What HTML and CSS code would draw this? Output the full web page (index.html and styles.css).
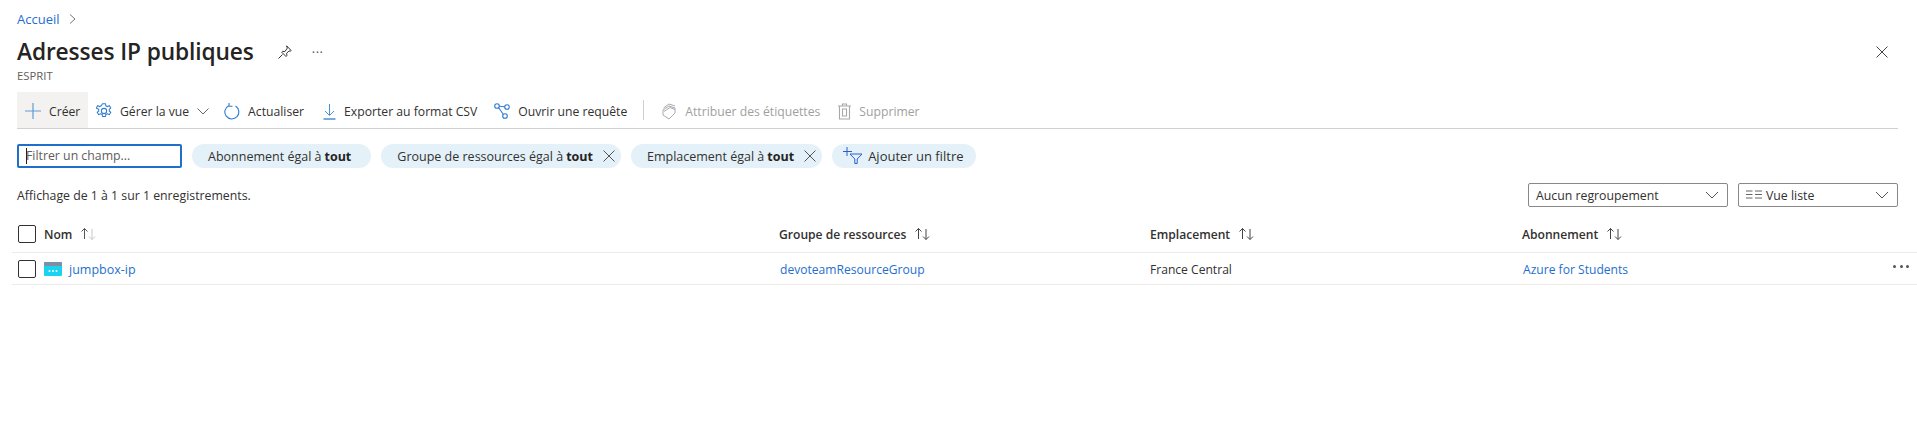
FILE: index.html
```html
<!DOCTYPE html>
<html lang="fr">
<head>
<meta charset="utf-8">
<title>Adresses IP publiques</title>
<link rel="stylesheet" href="styles.css">
</head>
<body>
<div class="page">
  <nav class="crumb"><a href="#">Accueil</a>
    <svg class="chev" width="7" height="10" viewBox="0 0 7 10"><path d="M1 .5l5 4.500-5 4.500" fill="none" stroke="#777" stroke-width="1"/></svg>
  </nav>
  <header class="head">
    <div class="title-row">
      <h1>Adresses IP publiques</h1>
      <svg class="pin" width="14" height="14" viewBox="0 0 14 14"><path d="M8.500.8l4.700 4.700-1 .7-1.200-.3-2.400 2.400.3 2.300-.9.9-4.300-4.300.9-.9 2.300.3L9.300 3.200 9 2z" fill="none" stroke="#333" stroke-width="1"/><path d="M.5 13.500l4-4" stroke="#333" stroke-width="1"/></svg>
      <span class="more-t">···</span>
      <svg class="close" width="12" height="12" viewBox="0 0 12 12"><path d="M.5.500l11 11M11.500.500l-11 11" stroke="#444" stroke-width="1"/></svg>
    </div>
    <div class="sub">ESPRIT</div>
  </header>
  <div class="toolbar">
    <button class="tb tb-on"><svg width="16" height="16" viewBox="0 0 16 16"><path d="M8 0v16M0 8h16" stroke="#5e9bd6" stroke-width="1.200"/></svg>Créer</button>
    <button class="tb tb-gear"><svg width="16" height="16" viewBox="0 0 17 17"><g fill="none" stroke="#2f7cd0" stroke-width="1.100"><circle cx="8.500" cy="8.500" r="2.800"/><path d="M7 .8h3l.5 2.200 1.700.8 2-1 1.500 2.500-1.600 1.500v1.600l1.600 1.500-1.500 2.500-2-1-1.700.8-.5 2.200H7l-.5-2.200-1.700-.8-2 1-1.500-2.500 1.600-1.500V6.800L.3 5.300l1.500-2.500 2 1 1.700-.8z"/></g></svg>Gérer la vue<svg class="caret" width="12" height="7" viewBox="0 0 12 7"><path d="M.5.500L6 6l5.500-5.500" fill="none" stroke="#666"/></svg></button>
    <button class="tb tb-ref"><svg width="16" height="17" viewBox="0 0 16 17"><path d="M11.500 3a7 7 0 1 1-6.800-.3" fill="none" stroke="#2f7cd0" stroke-width="1.100"/><path d="M5 0v3.200H8.500" fill="none" stroke="#2f7cd0" stroke-width="1.100"/></svg>Actualiser</button>
    <button class="tb tb-ex"><svg width="15" height="17" viewBox="0 0 15 17"><path d="M7.500 1v11M3 8l4.500 4.500L12 8" fill="none" stroke="#4a90d9" stroke-width="1"/><path d="M1.500 16h12" stroke="#2f7cd0" stroke-width="1.300"/></svg>Exporter au format CSV</button>
    <button class="tb tb-q"><svg width="16" height="16" viewBox="0 0 16 16"><g fill="none" stroke="#2f7cd0" stroke-width="1.100"><circle cx="3" cy="3" r="2.300"/><circle cx="13" cy="4" r="2.300"/><circle cx="11" cy="13" r="2.300"/><path d="M5.300 3.300l5.400.5M4.700 4.700l4.700 6.800"/></g></svg>Ouvrir une requête</button>
    <span class="sep"></span>
    <button class="tb dis tb-tag"><svg width="14" height="17" viewBox="0 0 14 17"><path d="M1 7l6-4 6 2v5l-6 6-6-4z M1.500 5L7 1l6 2M2 8.500L8 4.500l5 2" fill="none" stroke="#aaa" stroke-width="1"/></svg>Attribuer des étiquettes</button>
    <button class="tb dis tb-del"><svg width="15" height="17" viewBox="0 0 15 17"><path d="M1 3h13M5.500 3V1h4v2M2.500 3v13h10V3M5.500 6v7h4V6z" fill="none" stroke="#a8a8a8" stroke-width="1.100"/></svg>Supprimer</button>
  </div>
  <div class="filters">
    <div class="field"><span class="cursor"></span>Filtrer un champ...</div>
    <span class="pill">Abonnement égal à <b>tout</b></span>
    <span class="pill pill-x">Groupe de ressources égal à <b>tout</b><svg width="12" height="12" viewBox="0 0 12 12"><path d="M.5.500l11 11M11.500.500l-11 11" stroke="#555" stroke-width="1"/></svg></span>
    <span class="pill pill-x">Emplacement égal à <b>tout</b><svg width="12" height="12" viewBox="0 0 12 12"><path d="M.5.500l11 11M11.500.500l-11 11" stroke="#555" stroke-width="1"/></svg></span>
    <span class="pill pill-add"><svg width="20" height="18" viewBox="0 0 20 18"><path d="M4 0v9M0 4.500h9" stroke="#2b5fd0" stroke-width="1"/><path d="M7 7h12l-4.800 5v4.500h-2.400V12z" fill="none" stroke="#2b5fd0" stroke-width="1"/></svg>Ajouter un filtre</span>
  </div>
  <div class="status">
    <span>Affichage de 1 à 1 sur 1 enregistrements.</span>
    <div class="drops">
      <div class="drop d1"><span>Aucun regroupement</span><svg width="14" height="8" viewBox="0 0 14 8"><path d="M1 1l6 6 6-6" fill="none" stroke="#555"/></svg></div>
      <div class="drop d2"><span class="vl"><svg width="16" height="10" viewBox="0 0 16 10"><path d="M0 1h6.500M0 4.500h6.500M0 8h6.500M9 1h7M9 4.500h7M9 8h7" stroke="#666"/></svg>Vue liste</span><svg width="14" height="8" viewBox="0 0 14 8"><path d="M1 1l6 6 6-6" fill="none" stroke="#555"/></svg></div>
    </div>
  </div>
  <div class="table">
    <div class="row hdr">
      <div class="c"><span class="box"></span><b>Nom</b><svg class="sort" width="17" height="14" viewBox="0 0 17 14"><path d="M4.500 12V1.500M1.500 4.500l3-3 3 3" fill="none" stroke="#555"/><path d="M12 2v10.500M9 9.500l3 3 3-3" fill="none" stroke="#c8c8c8"/></svg></div>
      <div class="c"><b>Groupe de ressources</b><svg class="sort" width="17" height="14" viewBox="0 0 17 14"><path d="M4.500 12V1.500M1.500 4.500l3-3 3 3M12 2v10.500M9 9.500l3 3 3-3" fill="none" stroke="#444"/></svg></div>
      <div class="c"><b>Emplacement</b><svg class="sort" width="17" height="14" viewBox="0 0 17 14"><path d="M4.500 12V1.500M1.500 4.500l3-3 3 3M12 2v10.500M9 9.500l3 3 3-3" fill="none" stroke="#444"/></svg></div>
      <div class="c"><b>Abonnement</b><svg class="sort" width="17" height="14" viewBox="0 0 17 14"><path d="M4.500 12V1.500M1.500 4.500l3-3 3 3M12 2v10.500M9 9.500l3 3 3-3" fill="none" stroke="#444"/></svg></div>
    </div>
    <div class="row">
      <div class="c"><span class="box"></span><svg class="res" width="18" height="14" viewBox="0 0 18 14"><rect width="18" height="14" rx="1" fill="#19d3f0"/><rect width="18" height="4" rx="1" fill="#7f8f9f"/><circle cx="5.500" cy="9" r="1" fill="#fff"/><circle cx="9" cy="9" r="1" fill="#fff"/><circle cx="12.500" cy="9" r="1" fill="#fff"/></svg><a class="txt name" href="#">jumpbox-ip</a></div>
      <div class="c c-link"><a class="txt" href="#">devoteamResourceGroup</a></div>
      <div class="c"><span class="txt">France Central</span></div>
      <div class="c c-link"><a class="txt" href="#">Azure for Students</a><span class="dots"><i></i><i></i><i></i></span></div>
    </div>
  </div>
</div>
</body>
</html>
```
FILE: styles.css
```css
* { box-sizing: border-box; }
html, body { margin: 0; background: #fff; height: 100%; overflow: hidden; }
body { font-family: "Open Sans", "Noto Sans", "Liberation Sans", sans-serif; font-size: 12.300px; color: #323130; }
a { color: #1f6fd0; text-decoration: none; }
.page { padding: 0 19px 0 17px; position: relative; }
.crumb { height: 37px; padding-top: 10px; display: flex; align-items: flex-start; gap: 9px; line-height: 18px; font-size: 13px; }
.chev { margin-top: 4px; }
.title-row { height: 30px; display: flex; align-items: center; }
h1 { margin: 0; font-size: 22.700px; line-height: 30px; font-weight: 600; color: #252423; letter-spacing: -.1px; }
.pin { margin-left: 24px; }
.more-t { margin-left: 20px; font-size: 13px; color: #555; letter-spacing: .5px; }
.close { margin-left: auto; margin-right: 10px; }
.sub { font-size: 11.300px; line-height: 16px; color: #605e5c; margin-top: 1px; }
.toolbar { margin-top: 8px; height: 37px; border-bottom: 1px solid #d2d0ce; display: flex; align-items: stretch; font-size: 12.200px; }
.tb { border: 0; background: none; font: inherit; color: #323130; padding: 2px 0 0 15px; display: flex; align-items: center; gap: 8px; white-space: nowrap; }
.tb-on { background: #f3f2f1; width: 71px; padding-left: 8px; }
.tb-gear { padding-left: 8px; }
.tb-ex { padding-left: 18px; gap: 7px; }
.tb-q { padding-left: 17px; }
.tb .caret { margin-left: 0; }
.tb.dis { color: #a19f9d; }
.tb-tag { padding-left: 18px; gap: 9px; }
.tb-del { padding-left: 17px; gap: 7px; }
.sep { width: 1px; height: 20px; background: #d2d0ce; margin: 8px 0 0 16px; }
.filters { margin-top: 15px; display: flex; gap: 10px; align-items: center; font-size: 12.500px; }
.field { width: 165px; height: 24px; border: 2px solid #1f6fcb; border-radius: 2px; color: #605e5c; line-height: 20px; padding-left: 7px; position: relative; font-size: 12.300px; }
.cursor { position: absolute; left: 7px; top: 2px; width: 1px; height: 16px; background: #222; }
.pill { height: 24px; border-radius: 12px; background: #e5f1f9; display: inline-flex; align-items: center; padding: 0 20px 0 16px; white-space: nowrap; gap: 3px; }
.pill b { font-weight: 700; color: #252423; }
.pill-x { padding-right: 6px; }
.pill-x svg { margin-left: 7px; }
.pill-add { padding: 0 12px 0 11px; gap: 5px; font-size: 13px; }
.status { margin-top: 15px; height: 24px; display: flex; align-items: center; justify-content: space-between; }
.drops { display: flex; gap: 10px; }
.drop { height: 24px; border: 1px solid #8a8886; border-radius: 2px; display: flex; align-items: center; justify-content: space-between; padding: 0 8px 0 7px; }
.d1 { width: 200px; }
.d2 { width: 160px; }
.vl { display: flex; align-items: center; gap: 4px; }
.table { margin: 9px -19px 0 -5px; }
.row { display: grid; grid-template-columns: 761px 371px 372px 1fr; height: 32px; border-bottom: 1px solid #edebe9; align-items: center; padding-left: 6px; font-size: 12.100px; }
.row.hdr { height: 37px; }
.row b { font-weight: 600; }
.c { display: flex; align-items: center; white-space: nowrap; position: relative; }
.c-link { padding-left: 1px; }
.txt { padding-top: 2px; }
.name { font-size: 12.500px; }
.box { width: 18px; height: 18px; border: 1px solid #323130; border-radius: 2px; margin-right: 8px; }
.sort { margin-left: 8px; }
.res { margin-right: 7px; }
.dots { position: absolute; right: 8px; top: 6px; display: flex; gap: 3.500px; }
.dots i { width: 3px; height: 3px; border-radius: 50%; background: #555; }
```
